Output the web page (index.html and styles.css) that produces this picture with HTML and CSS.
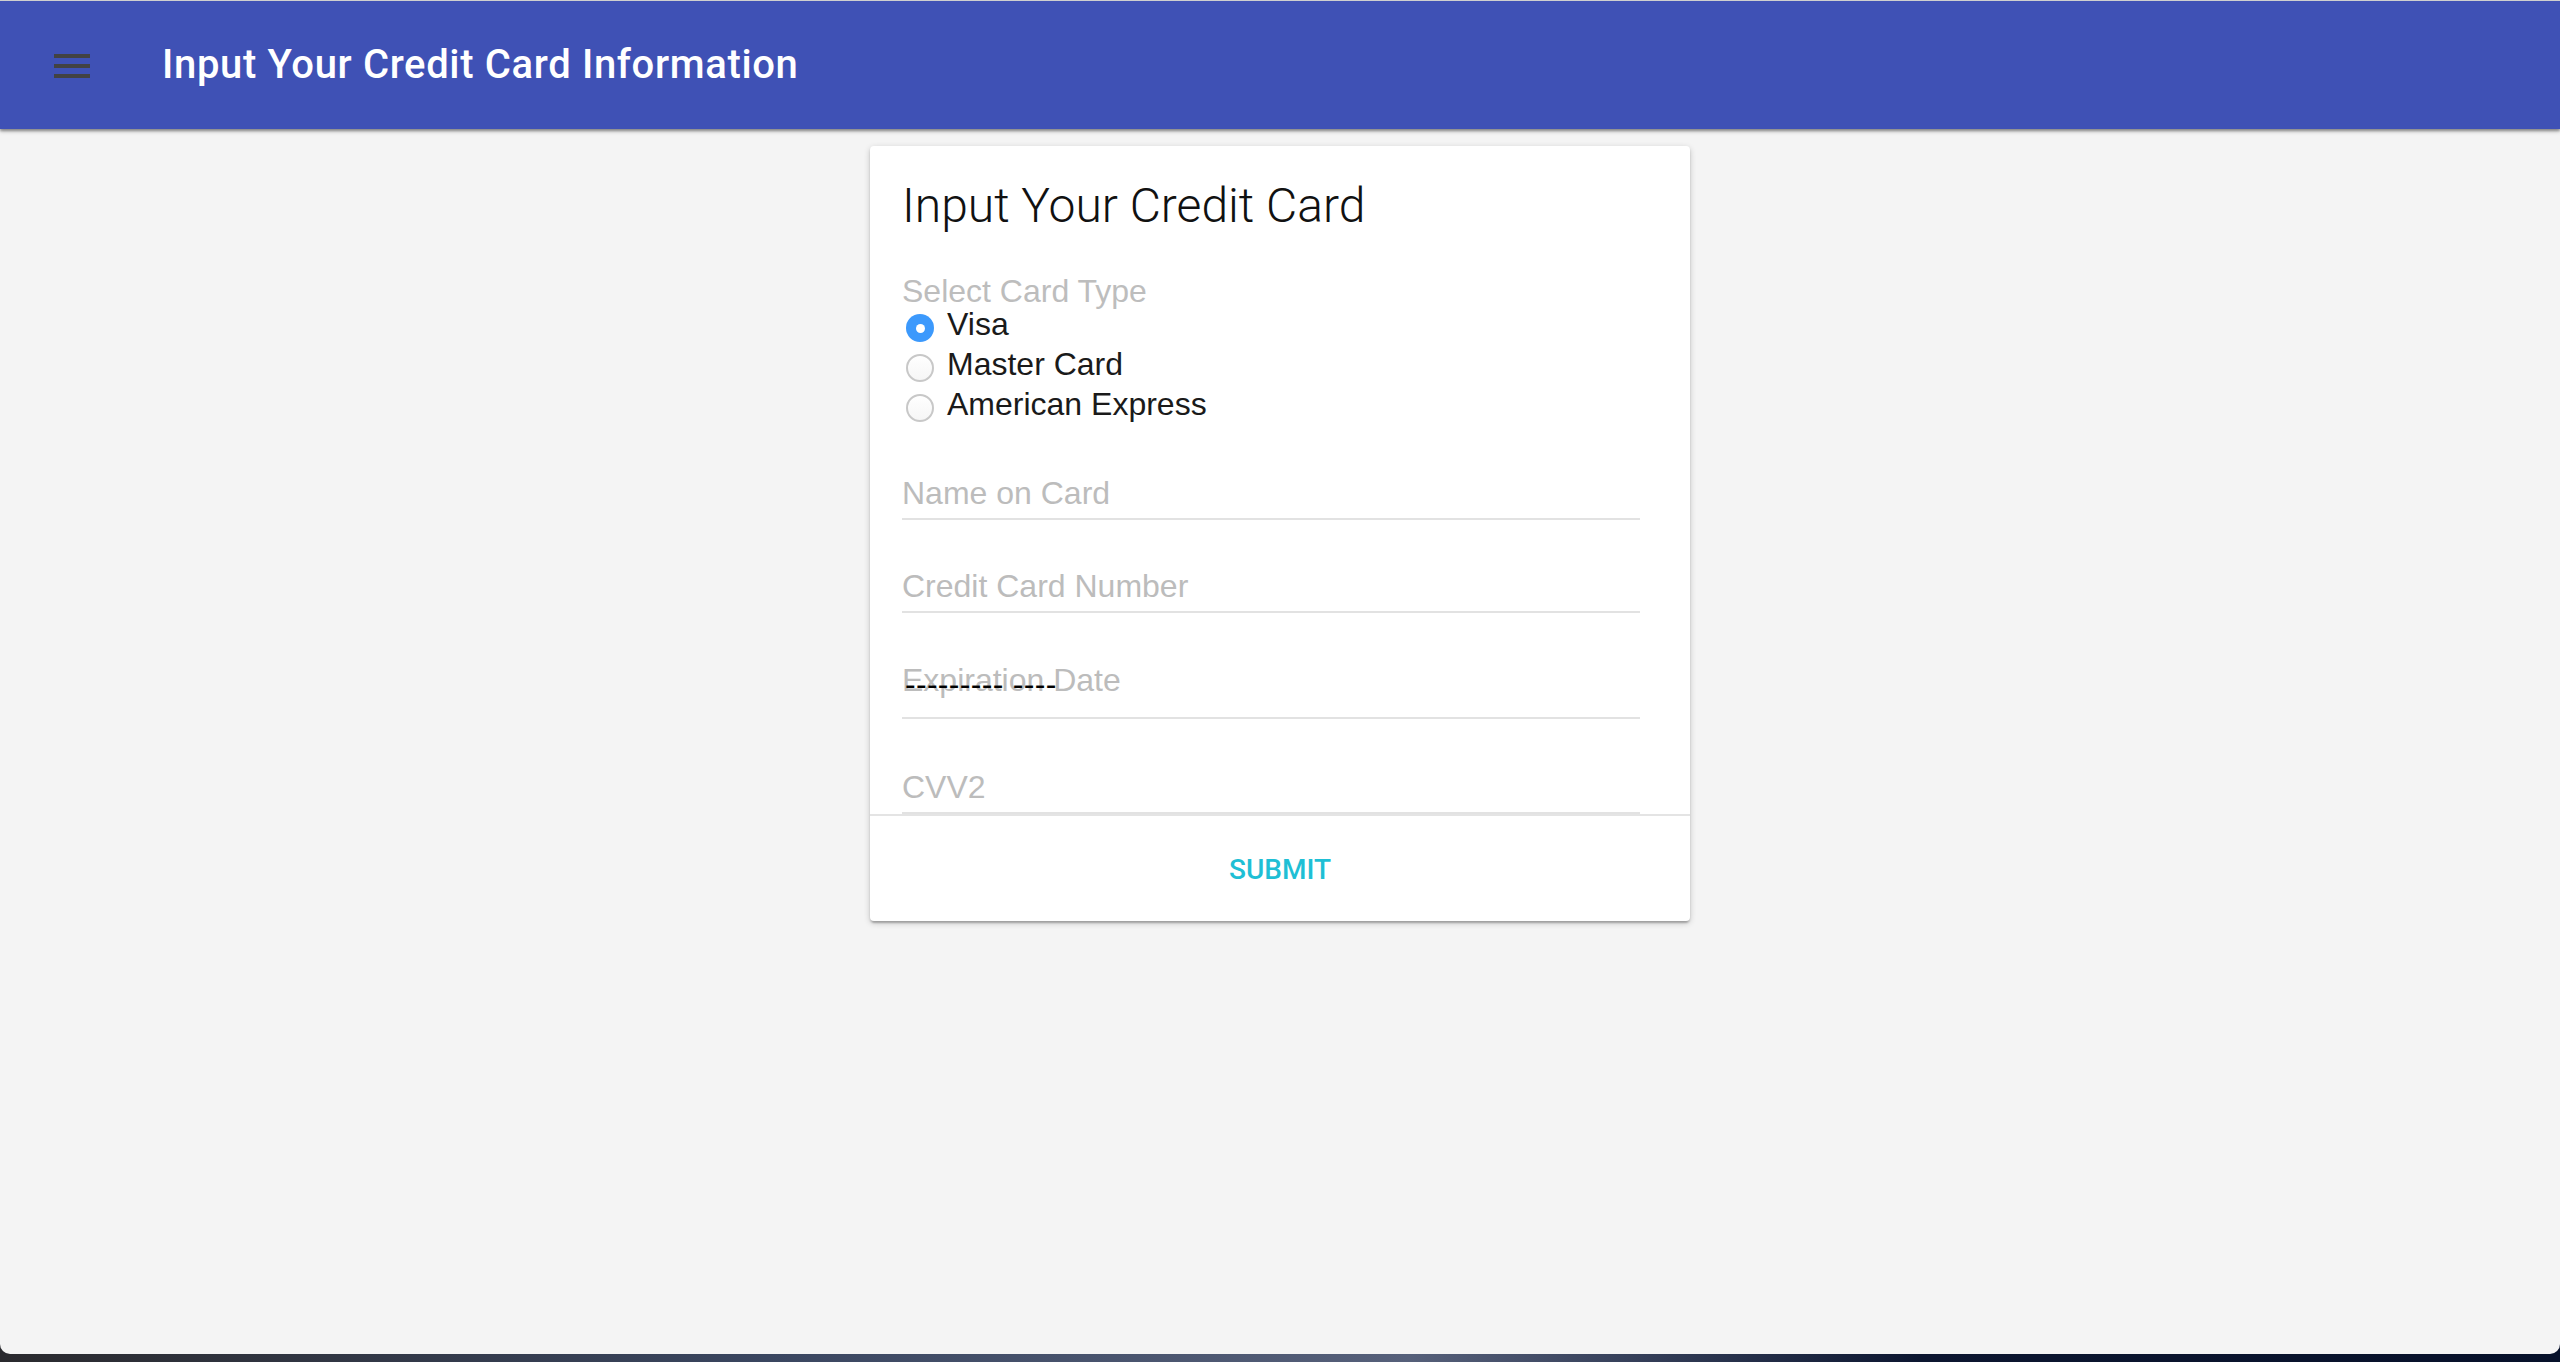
FILE: index.html
```html
<!DOCTYPE html>
<html lang="en">
<head>
<meta charset="utf-8">
<title>Input Your Credit Card Information</title>
<link rel="stylesheet" href="styles.css">
</head>
<body>
<div class="window">
  <header class="toolbar">
    <button class="menu-btn" aria-label="Menu">
      <svg width="36" height="24" viewBox="0 0 36 24"><rect x="0" y="0" width="36" height="4" fill="#424242"/><rect x="0" y="10" width="36" height="4" fill="#424242"/><rect x="0" y="20" width="36" height="4" fill="#424242"/></svg>
    </button>
    <h1 class="toolbar-title">Input Your Credit Card Information</h1>
  </header>
  <main class="content">
    <section class="card">
      <div class="card-body">
        <h2 class="card-title">Input Your Credit Card</h2>
        <div class="group-label">Select Card Type</div>
        <div class="radio-list">
          <div class="radio checked"><span class="radio-circle"></span><span>Visa</span></div>
          <div class="radio"><span class="radio-circle"></span><span>Master Card</span></div>
          <div class="radio"><span class="radio-circle"></span><span>American Express</span></div>
        </div>
        <div class="field f1"><span class="ph">Name on Card</span></div>
        <div class="field f2"><span class="ph">Credit Card Number</span></div>
        <div class="field f3 date"><span class="ph">Expiration Date</span><span class="dashes">--------- ----</span></div>
        <div class="field f4"><span class="ph">CVV2</span></div>
      </div>
      <div class="card-actions">
        <button class="submit">SUBMIT</button>
      </div>
    </section>
  </main>
</div>
<div class="desktop"></div>
</body>
</html>
```

FILE: styles.css
```css
html, body {
  margin: 0;
  padding: 0;
}
body {
  width: 2560px;
  height: 1362px;
  overflow: hidden;
  background: linear-gradient(90deg, #2a2a2e 0%, #3a4660 30%, #56607a 55%, #0c1630 75%, #07112a 100%);
  display: flex;
  flex-direction: column;
}
.window {
  height: 1353px;
  background: #f4f4f4;
  border-top: 1px solid #cfcfcf;
  border-radius: 0 0 10px 10px;
  display: flex;
  flex-direction: column;
  overflow: hidden;
}
.desktop {
  flex: 1;
}
.toolbar {
  height: 128px;
  flex: none;
  background: #3f51b5;
  display: flex;
  align-items: center;
  padding-left: 54px;
  box-shadow: 0 2px 4px rgba(0,0,0,0.35), 0 2px 2px rgba(0,0,0,0.2);
  position: relative;
  z-index: 2;
}
.menu-btn {
  border: 0;
  background: none;
  padding: 0;
  margin: 2px 0 0 0;
  width: 36px;
  height: 24px;
  display: block;
}
.menu-btn svg { display: block; }
.toolbar-title {
  margin: 0 0 0 72px;
  font-family: Roboto, "Liberation Sans", sans-serif;
  font-weight: 500;
  font-size: 40px;
  letter-spacing: 0.65px;
  color: #fff;
  line-height: 48px;
}
.content {
  flex: 1;
  display: flex;
  justify-content: center;
  align-items: flex-start;
  padding-top: 17px;
}
.card {
  width: 820px;
  background: #fff;
  border-radius: 4px;
  box-shadow: 0 2px 6px rgba(0,0,0,0.2), 0 2px 2px rgba(0,0,0,0.14), 0 4px 2px -2px rgba(0,0,0,0.12);
  display: flex;
  flex-direction: column;
}
.card-body {
  height: 668px;
  box-sizing: border-box;
  overflow: hidden;
  padding: 28px 0 0 32px;
}
.card-title {
  margin: 0;
  font-family: Roboto, "Liberation Sans", sans-serif;
  font-weight: 300;
  font-size: 48px;
  line-height: 64px;
  color: #111;
}
.group-label {
  margin-top: 40px;
  font-family: "Liberation Sans", Arial, sans-serif;
  font-size: 32px;
  line-height: 26px;
  color: #bdbdbd;
}
.radio-list {
  display: flex;
  flex-direction: column;
}
.radio {
  display: flex;
  align-items: center;
  height: 40px;
  font-family: "Liberation Sans", Arial, sans-serif;
  font-size: 32px;
  line-height: 40px;
  color: #1a1a1a;
}
.radio-circle {
  box-sizing: border-box;
  width: 28px;
  height: 28px;
  border-radius: 50%;
  margin: 8px 13px 0 4px;
  border: 2px solid #c8c8c8;
  background: linear-gradient(#ffffff, #f6f6f6);
  flex: none;
  display: flex;
  align-items: center;
  justify-content: center;
}
.radio.checked .radio-circle {
  border: 0;
  background: #3c99fc;
}
.radio.checked .radio-circle::after {
  content: "";
  width: 9px;
  height: 9px;
  border-radius: 50%;
  background: #fff;
}
.field {
  width: 738px;
  height: 40px;
  padding-bottom: 5px;
  border-bottom: 2px solid #e2e2e2;
  font-family: "Liberation Sans", Arial, sans-serif;
  font-size: 32px;
  line-height: 40px;
  position: relative;
}
.field .ph { color: #bcbcbc; }
.f1 { margin-top: 49px; }
.f2 { margin-top: 46px; }
.f3 { margin-top: 47px; padding-bottom: 17px; }
.f4 { margin-top: 48px; }
.dashes {
  position: absolute;
  left: 3px;
  top: 4px;
  color: #000;
  font-family: "Liberation Sans", Arial, sans-serif;
  font-size: 32px;
  line-height: 40px;
  letter-spacing: 0.3px;
}
.card-actions {
  border-top: 2px solid #e4e4e4;
  height: 103px;
  display: flex;
  justify-content: center;
  align-items: center;
  padding-top: 2px;
  box-sizing: content-box;
}
.submit {
  border: 0;
  background: none;
  padding: 0;
  font-family: Roboto, "Liberation Sans", sans-serif;
  font-weight: 500;
  font-size: 28px;
  line-height: 36px;
  color: #1fbfd5;
  letter-spacing: 0;
}
```
